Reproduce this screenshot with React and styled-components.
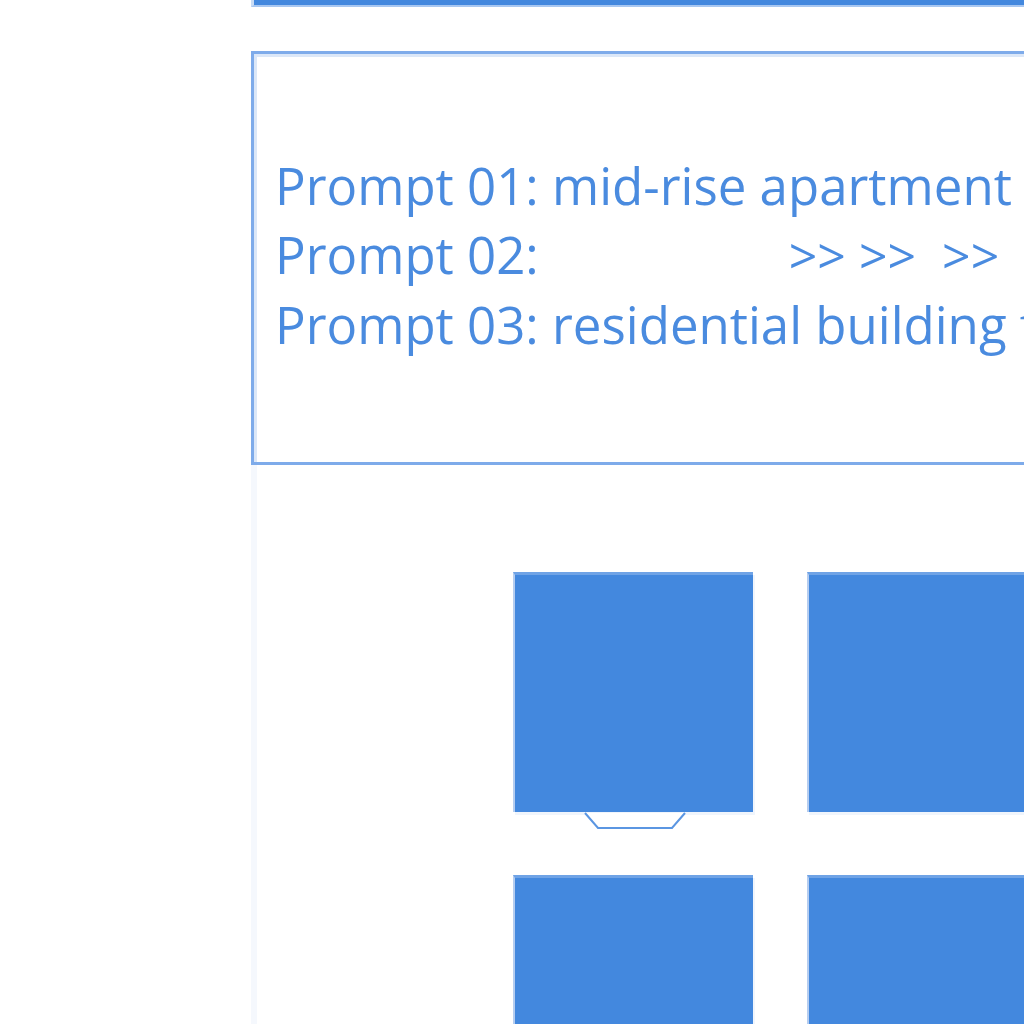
import React from 'react';
import styled, { createGlobalStyle } from 'styled-components';

const GlobalStyle = createGlobalStyle`
  html, body {
    margin: 0;
    padding: 0;
    background: #ffffff;
  }
  body {
    font-family: 'Open Sans', 'Noto Sans', sans-serif;
    overflow: hidden;
  }
`;

const Page = styled.div`
  display: flex;
  width: 1024px;
  height: 1024px;
  overflow: hidden;
`;

const Sidebar = styled.div`
  flex: 0 0 251px;
`;

const Main = styled.div`
  flex: 1;
  min-width: 0;
  display: flex;
  flex-direction: column;
`;

const TopBar = styled.div`
  height: 5px;
  background: #4388de;
  border-bottom: 2px solid #a8c7f1;
  border-left: 3px solid #c9dcf5;
  flex-shrink: 0;
`;

const PromptBox = styled.div`
  margin-top: 44px;
  height: 402px;
  width: 900px;
  border: 3px solid #7eabea;
  box-shadow: inset 3px 3px 0 #dbe7f8;
  display: flex;
  flex-direction: column;
  justify-content: center;
  padding: 0 0 6px 21px;
  flex-shrink: 0;
`;

const PromptLine = styled.div`
  font-size: 51px;
  line-height: 69px;
  color: #4a8bdf;
  white-space: pre;
`;

const Gap = styled.span`
  display: inline-block;
  width: ${props => props.$w}px;
`;

const Arrows = styled.span`
  font-size: 50px;
`;

const Panel = styled.div`
  flex: 1;
  border-left: 6px solid #f5f8fd;
  padding: 107px 0 0 256px;
`;

const Grid = styled.div`
  display: grid;
  grid-template-columns: repeat(2, 240px);
  column-gap: 54px;
  row-gap: 63px;
`;

const Tile = styled.div`
  position: relative;
  height: 240px;
  background: #4388de;
  border-top: 3px solid #6fa3e6;
  border-left: 2px solid #b5cdf0;
  box-sizing: border-box;
  box-shadow: 2px 3px 0 #f0f5fc;
`;

const Tab = styled.svg`
  position: absolute;
  left: 68px;
  top: 100%;
`;

const TileTab = () => (
  <Tab width="106" height="18" viewBox="0 0 106 18">
    <path d="M2 1 L15 16 L89 16 L102 1" fill="#ffffff" stroke="#5b96e2" strokeWidth="2" />
  </Tab>
);

const App = () => (
  <Page>
    <GlobalStyle />
    <Sidebar />
    <Main>
      <TopBar />
      <PromptBox>
        <PromptLine>Prompt 01: mid-rise apartment block with balconies</PromptLine>
        <PromptLine>
          Prompt 02:<Gap $w={250} /><Arrows>{'>> >>  >>'}</Arrows>
        </PromptLine>
        <PromptLine>Prompt 03: residential building facade</PromptLine>
      </PromptBox>
      <Panel>
        <Grid>
          <Tile>
            <TileTab />
          </Tile>
          <Tile />
          <Tile />
          <Tile />
        </Grid>
      </Panel>
    </Main>
  </Page>
);

export default App;
